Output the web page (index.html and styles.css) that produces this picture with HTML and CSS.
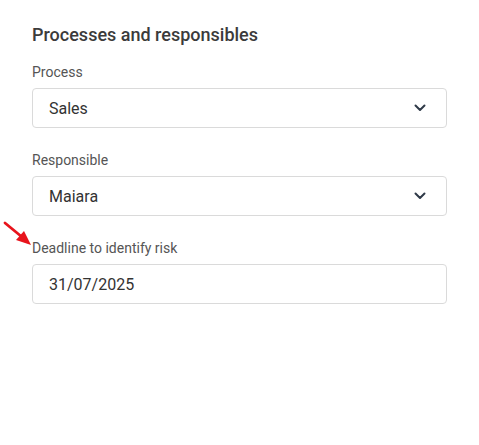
FILE: index.html
```html
<!DOCTYPE html>
<html>
<head>
<meta charset="utf-8">
<link rel="stylesheet" href="styles.css">
</head>
<body>
<div class="panel">
  <h2 class="title">Processes and responsibles</h2>
  <div class="fields">
    <div class="field">
      <label class="label">Process</label>
      <div class="control">
        <span class="value">Sales</span>
        <svg class="chevron" width="12" height="8" viewBox="0 0 12 8"><path d="M1.5 1.5 L6 6 L10.5 1.5" fill="none" stroke="#2f3a48" stroke-width="2" stroke-linecap="round" stroke-linejoin="round"/></svg>
      </div>
    </div>
    <div class="field">
      <label class="label">Responsible</label>
      <div class="control">
        <span class="value">Maiara</span>
        <svg class="chevron" width="12" height="8" viewBox="0 0 12 8"><path d="M1.5 1.5 L6 6 L10.5 1.5" fill="none" stroke="#2f3a48" stroke-width="2" stroke-linecap="round" stroke-linejoin="round"/></svg>
      </div>
    </div>
    <div class="field deadline">
      <svg class="arrow" width="30" height="26" viewBox="0 0 30 26"><line x1="2" y1="2" x2="19" y2="16" stroke="#e8141c" stroke-width="2.8" stroke-linecap="round"/><polygon points="28,24 13,19 21,10" fill="#e8141c"/></svg>
      <label class="label">Deadline to identify risk</label>
      <div class="control">
        <span class="value">31/07/2025</span>
      </div>
    </div>
  </div>
</div>
</body>
</html>
```
FILE: styles.css
```css
html, body {
  margin: 0;
  padding: 0;
  background: #ffffff;
}
body {
  font-family: Roboto, "Liberation Sans", Arial, sans-serif;
}
.panel {
  padding: 24px 0 0 32px;
  width: 415px;
}
.title {
  margin: 0 0 19px 0;
  font-size: 18px;
  line-height: 21px;
  font-weight: 500;
  color: #3b3b3b;
}
.fields {
  display: flex;
  flex-direction: column;
  gap: 24px;
}
.field {
  display: flex;
  flex-direction: column;
  gap: 8px;
  position: relative;
}
.label {
  font-size: 14px;
  line-height: 16px;
  color: #555555;
}
.control {
  box-sizing: border-box;
  height: 40px;
  border: 1px solid #dadada;
  border-radius: 4px;
  display: flex;
  align-items: center;
  justify-content: space-between;
  padding: 0 20px 0 16px;
}
.value {
  font-size: 16px;
  color: #333333;
}
.chevron {
  display: block;
}
.arrow {
  position: absolute;
  left: -29px;
  top: -19px;
}
```
